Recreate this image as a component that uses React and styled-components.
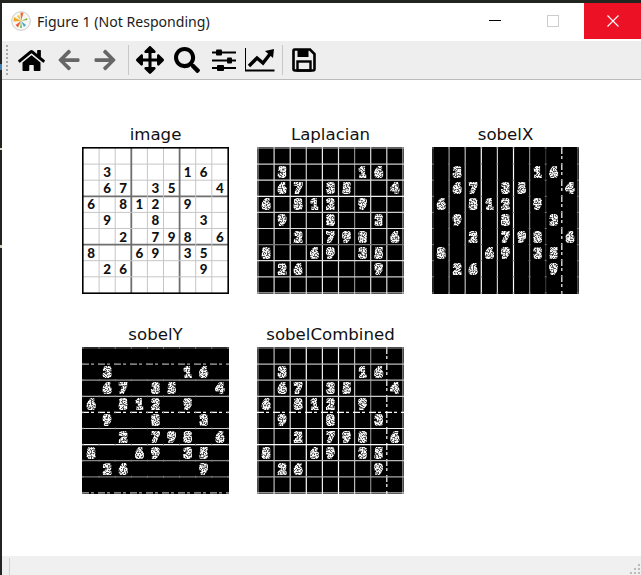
import React from 'react';
import styled, { createGlobalStyle } from 'styled-components';
import { FaHome, FaArrowLeft, FaArrowRight, FaArrowsAlt, FaSearch } from 'react-icons/fa';

const Global = createGlobalStyle`
  html, body {
    margin: 0;
    padding: 0;
    background: #22241f;
    overflow: hidden;
  }
`;

const PUZZLE = [
  '.........',
  '.3....16.',
  '.67.35..4',
  '6.812.9..',
  '.9..8..3.',
  '..2.798.6',
  '8..69.35.',
  '.26....9.',
  '.........',
];

const CELL = 16.1;
const pos = (i) => 1 + i * CELL;
const idx = [0, 1, 2, 3, 4, 5, 6, 7, 8, 9];

const PANELS = [
  { title: 'image', kind: 'image' },
  {
    title: 'Laplacian',
    kind: 'lap',
    seed: 3,
    vert: ['#bbb', '#ddd', '#eee', '#ccc', '#eee', '#ddd', '#888', '#ddd', '#ddd', '#ccc'],
    horiz: ['#bbb', '#ccc', '#ddd', '#eee', '#ccc', '#ddd', '#777', '#ddd', '#ccc', '#ddd'],
  },
  {
    title: 'sobelX',
    kind: 'x',
    seed: 8,
    vert: ['#444', '#999', '#bbb', '#fff', '#ccc', '#fff', '#888', '#333', '#fff', '#777'],
    dashedV: [8],
  },
  {
    title: 'sobelY',
    kind: 'y',
    seed: 14,
    horiz: ['#555', '#aaa', '#999', '#aaa', '#fff', '#ccc', '#fff', '#888', '#777', '#ddd'],
    dashedH: [1, 4, 9],
  },
  {
    title: 'sobelCombined',
    kind: 'both',
    seed: 21,
    vert: ['#999', '#bbb', '#ddd', '#fff', '#eee', '#fff', '#bbb', '#888', '#fff', '#bbb'],
    horiz: ['#999', '#bbb', '#bbb', '#ccc', '#fff', '#eee', '#fff', '#bbb', '#aaa', '#eee'],
    dashedV: [8],
    dashedH: [4],
  },
];

const Frame = styled.div`
  box-sizing: border-box;
  width: 641px;
  height: 575px;
  padding: 3px 0 0 2px;
  background: linear-gradient(
      to bottom,
      transparent 64px,
      #3f7fb0 64px,
      #3f7fb0 70px,
      transparent 70px,
      transparent 148px,
      #d8d8c8 148px,
      #d8d8c8 150px,
      transparent 150px,
      transparent 245px,
      #cfcfc0 245px,
      #cfcfc0 248px,
      transparent 248px
    )
    0 0 / 2px 100% no-repeat;
`;

const Window = styled.div`
  display: flex;
  flex-direction: column;
  height: 100%;
  background: #fff;
`;

const TitleBar = styled.div`
  display: flex;
  align-items: flex-start;
  height: 38px;
  flex: none;
`;

const Caption = styled.div`
  display: flex;
  align-items: center;
  gap: 6px;
  flex: 1;
  height: 36px;
  padding-left: 9px;
  font-family: 'Noto Sans', sans-serif;
  font-size: 14.1px;
  color: #1b1b1b;
`;

const WinButton = styled.div`
  display: flex;
  align-items: center;
  justify-content: center;
  width: ${(p) => p.$w}px;
  height: 36px;
  background: ${(p) => (p.$close ? '#ec1125' : 'transparent')};
`;

const Toolbar = styled.div`
  display: flex;
  align-items: center;
  height: 38px;
  flex: none;
  background: #eee;
  border-bottom: 1px solid #bbb;
  padding-left: 4px;
`;

const Grip = styled.div`
  width: 2px;
  height: 31px;
  margin-right: 9px;
  background: repeating-linear-gradient(to bottom, #a8a8a8 0 2px, transparent 2px 4px);
`;

const ToolButton = styled.div`
  display: flex;
  align-items: center;
  justify-content: center;
  flex: none;
  width: ${(p) => p.$w}px;
  margin-right: ${(p) => p.$gap || 0}px;
  height: 30px;
  color: ${(p) => (p.$dim ? '#666' : '#000')};
`;

const ToolSep = styled.div`
  width: 1px;
  height: 30px;
  margin-right: ${(p) => p.$r}px;
  background: #c8c8c8;
`;

const Canvas = styled.div`
  flex: 1;
  display: grid;
  grid-template-columns: repeat(3, 147px);
  grid-auto-rows: 169px;
  column-gap: 28px;
  row-gap: 31px;
  align-content: start;
  padding: 45px 0 0 80px;
`;

const Plot = styled.figure`
  display: flex;
  flex-direction: column;
  margin: 0;
`;

const PlotTitle = styled.figcaption`
  height: 19px;
  margin-bottom: 3px;
  text-align: center;
  font-family: 'DejaVu Sans', sans-serif;
  font-size: 16.6px;
  line-height: 19px;
  color: #111;
  white-space: nowrap;
`;

const PlotSvg = styled.svg`
  display: block;
  width: 147px;
  height: 147px;
`;

const Digit = styled.text`
  font-family: 'Lato', sans-serif;
  font-weight: 900;
  font-size: 13.4px;
  text-anchor: middle;
`;

const StatusBar = styled.div`
  position: relative;
  flex: none;
  height: 19px;
  background: #f0f0f0;
`;

const StatusSep = styled.div`
  width: 1px;
  height: 17px;
  margin: 2px 0 0 7px;
  background: #d2d2d2;
`;

const SizeGrip = styled.svg`
  position: absolute;
  right: 0;
  bottom: 0;
`;

const Digits = ({ fill, ...rest }) => (
  <g fill={fill} {...rest}>
    {PUZZLE.map((row, r) =>
      row.split('').map((d, c) =>
        d === '.' ? null : (
          <Digit key={`${r}-${c}`} x={pos(c) + CELL / 2} y={pos(r) + CELL / 2 + 5}>
            {d}
          </Digit>
        )
      )
    )}
  </g>
);

const SudokuImage = () => (
  <PlotSvg viewBox="0 0 147 147">
    <rect width="147" height="147" fill="#fff" />
    {idx.slice(1, 9).map((i) => {
      const heavy = i % 3 === 0;
      const stroke = heavy ? '#6e6e6e' : '#c6c6c6';
      const w = heavy ? 1.8 : 1;
      return (
        <g key={i} stroke={stroke} strokeWidth={w}>
          <line x1={pos(i)} x2={pos(i)} y1="0" y2="147" />
          <line y1={pos(i)} y2={pos(i)} x1="0" x2="147" />
        </g>
      );
    })}
    <rect x="0.8" y="0.8" width="145.4" height="145.4" fill="none" stroke="#000" strokeWidth="1.6" />
    <Digits fill="#111" />
  </PlotSvg>
);

const EdgeImage = ({ panel }) => {
  const id = `speckle-${panel.kind}`;
  const { vert, horiz, dashedV = [], dashedH = [] } = panel;
  return (
    <PlotSvg viewBox="0 0 147 147">
      <defs>
        <filter id={id} x="0" y="0" width="147" height="147" filterUnits="userSpaceOnUse">
          <feMorphology in="SourceAlpha" operator="dilate" radius="0.8" result="fat" />
          <feColorMatrix
            in="fat"
            values="0 0 0 0 1  0 0 0 0 1  0 0 0 0 1  0 0 0 0.3 0"
            result="haze"
          />
          <feTurbulence type="fractalNoise" baseFrequency="0.75" numOctaves="1" seed={panel.seed} />
          <feColorMatrix
            values="0 0 0 0 1  0 0 0 0 1  0 0 0 0 1  6 0 0 0 -2.3"
            result="noise"
          />
          <feComposite in="noise" in2="fat" operator="in" result="specks" />
          <feMerge result="merged">
            <feMergeNode in="haze" />
            <feMergeNode in="specks" />
          </feMerge>
          <feGaussianBlur in="merged" stdDeviation="0.25" />
        </filter>
      </defs>
      <rect width="147" height="147" fill="#000" />
      {vert &&
        idx.map((i) => (
          <line
            key={`v${i}`}
            x1={pos(i)}
            x2={pos(i)}
            y1="0"
            y2="147"
            stroke={vert[i]}
            strokeWidth={i === 0 || i === 9 ? 1 : 1.2}
            strokeDasharray={dashedV.includes(i) ? '7 2 3 4' : undefined}
          />
        ))}
      {horiz &&
        idx.map((i) => (
          <line
            key={`h${i}`}
            y1={pos(i)}
            y2={pos(i)}
            x1="0"
            x2="147"
            stroke={horiz[i]}
            strokeWidth={i === 0 || i === 9 ? 1 : 1.2}
            strokeDasharray={dashedH.includes(i) ? '7 2 3 4' : undefined}
          />
        ))}
      {!horiz &&
        idx.map((i) => (
          <line
            key={`tx${i}`}
            y1={pos(i)}
            y2={pos(i)}
            x1="0"
            x2="147"
            stroke="#777"
            strokeDasharray="2 14.1"
          />
        ))}
      {!vert &&
        idx.map((i) => (
          <line
            key={`ty${i}`}
            x1={pos(i)}
            x2={pos(i)}
            y1="0"
            y2="147"
            stroke="#777"
            strokeDasharray="2 14.1"
          />
        ))}
      <Digits fill="#fff" filter={`url(#${id})`} />
    </PlotSvg>
  );
};

const Logo = () => (
  <svg width="20" height="20" viewBox="0 0 20 20">
    <circle cx="10" cy="10" r="9.3" fill="#f7f7f5" stroke="#c9c9c9" strokeWidth="1" />
    <path d="M10 10 L3 6 L2.5 10.5 Z" fill="#f2a81d" />
    <path d="M10 10 L12.5 1.8 L9.5 1.5 Z" fill="#ef6a2c" />
    <path d="M10 10 L7 16.5 L4.5 14 Z" fill="#e9603a" />
    <path d="M10 10 L15 14 L13 16 Z" fill="#4aa6c9" />
    <path d="M10 10 L11 17 L9 17 Z" fill="#6cbf5b" />
    <path d="M10 10 L16 7 L16.5 9 Z" fill="#8fb04a" />
    <path d="M10 10 L6 5 L8 4 Z" fill="#e8c33a" />
  </svg>
);

const SlidersIcon = () => (
  <svg width="24" height="22" viewBox="0 0 24 22" fill="#000">
    <rect x="0" y="2.5" width="24" height="2" />
    <rect x="4" y="0.5" width="6" height="6" rx="1" />
    <rect x="0" y="10.5" width="24" height="2" />
    <rect x="15" y="8.5" width="5" height="6" rx="1" />
    <rect x="0" y="18" width="24" height="2" />
    <rect x="5" y="16" width="7" height="6" rx="1" />
  </svg>
);

const ChartIcon = () => (
  <svg width="30" height="24" viewBox="0 0 30 24">
    <path d="M0.5 0 V22" stroke="#000" strokeWidth="1" />
    <path d="M0 22.5 H29.5" stroke="#000" strokeWidth="2" />
    <path d="M4 18 L12 10 L18 15 L25 6" fill="none" stroke="#000" strokeWidth="3.4" />
    <path d="M20 3 L29 1 L28 10 Z" fill="#000" />
  </svg>
);

const SaveIcon = () => (
  <svg width="24" height="24" viewBox="0 0 24 24">
    <path
      d="M2.5 1.5 H18 L22.5 6 V21 Q22.5 22.5 21 22.5 H3 Q1.5 22.5 1.5 21 V2.5 Q1.5 1.5 2.5 1.5 Z"
      fill="none"
      stroke="#000"
      strokeWidth="2.6"
    />
    <rect x="5.5" y="1.5" width="11" height="7.5" fill="#000" />
    <rect x="5.5" y="13.5" width="13" height="9" fill="none" stroke="#000" strokeWidth="2.4" />
  </svg>
);

const App = () => (
  <Frame>
    <Global />
    <Window>
      <TitleBar>
        <Caption>
          <Logo />
          Figure 1 (Not Responding)
        </Caption>
        <WinButton $w={54}>
          <svg width="12" height="12" viewBox="0 0 12 12">
            <line x1="0" x2="12" y1="5.5" y2="5.5" stroke="#000" />
          </svg>
        </WinButton>
        <WinButton $w={62}>
          <svg width="12" height="12" viewBox="0 0 12 12">
            <rect x="0.5" y="0.5" width="11" height="11" fill="none" stroke="#ccc" />
          </svg>
        </WinButton>
        <WinButton $w={57} $close>
          <svg width="12" height="12" viewBox="0 0 12 12">
            <path d="M0.5 0.5 L11.5 11.5 M11.5 0.5 L0.5 11.5" stroke="#fff" strokeWidth="1.1" />
          </svg>
        </WinButton>
      </TitleBar>
      <Toolbar>
        <Grip />
        <ToolButton $w={28} $gap={12}><FaHome size={27} /></ToolButton>
        <ToolButton $w={24} $gap={12} $dim><FaArrowLeft size={24} /></ToolButton>
        <ToolButton $w={24} $gap={11} $dim><FaArrowRight size={24} /></ToolButton>
        <ToolSep $r={7} />
        <ToolButton $w={28} $gap={10}><FaArrowsAlt size={28} /></ToolButton>
        <ToolButton $w={26} $gap={12}><FaSearch size={26} /></ToolButton>
        <ToolButton $w={24} $gap={9}><SlidersIcon /></ToolButton>
        <ToolButton $w={30} $gap={7}><ChartIcon /></ToolButton>
        <ToolSep $r={9} />
        <ToolButton $w={24}><SaveIcon /></ToolButton>
      </Toolbar>
      <Canvas>
        {PANELS.map((panel) => (
          <Plot key={panel.title}>
            <PlotTitle>{panel.title}</PlotTitle>
            {panel.kind === 'image' ? <SudokuImage /> : <EdgeImage panel={panel} />}
          </Plot>
        ))}
      </Canvas>
      <StatusBar>
        <StatusSep />
        <SizeGrip width="12" height="12" viewBox="0 0 12 12">
          <g fill="#bbb">
            <rect x="9" y="1" width="2" height="2" />
            <rect x="9" y="5" width="2" height="2" />
            <rect x="5" y="5" width="2" height="2" />
            <rect x="9" y="9" width="2" height="2" />
            <rect x="5" y="9" width="2" height="2" />
            <rect x="1" y="9" width="2" height="2" />
          </g>
        </SizeGrip>
      </StatusBar>
    </Window>
  </Frame>
);

export default App;
